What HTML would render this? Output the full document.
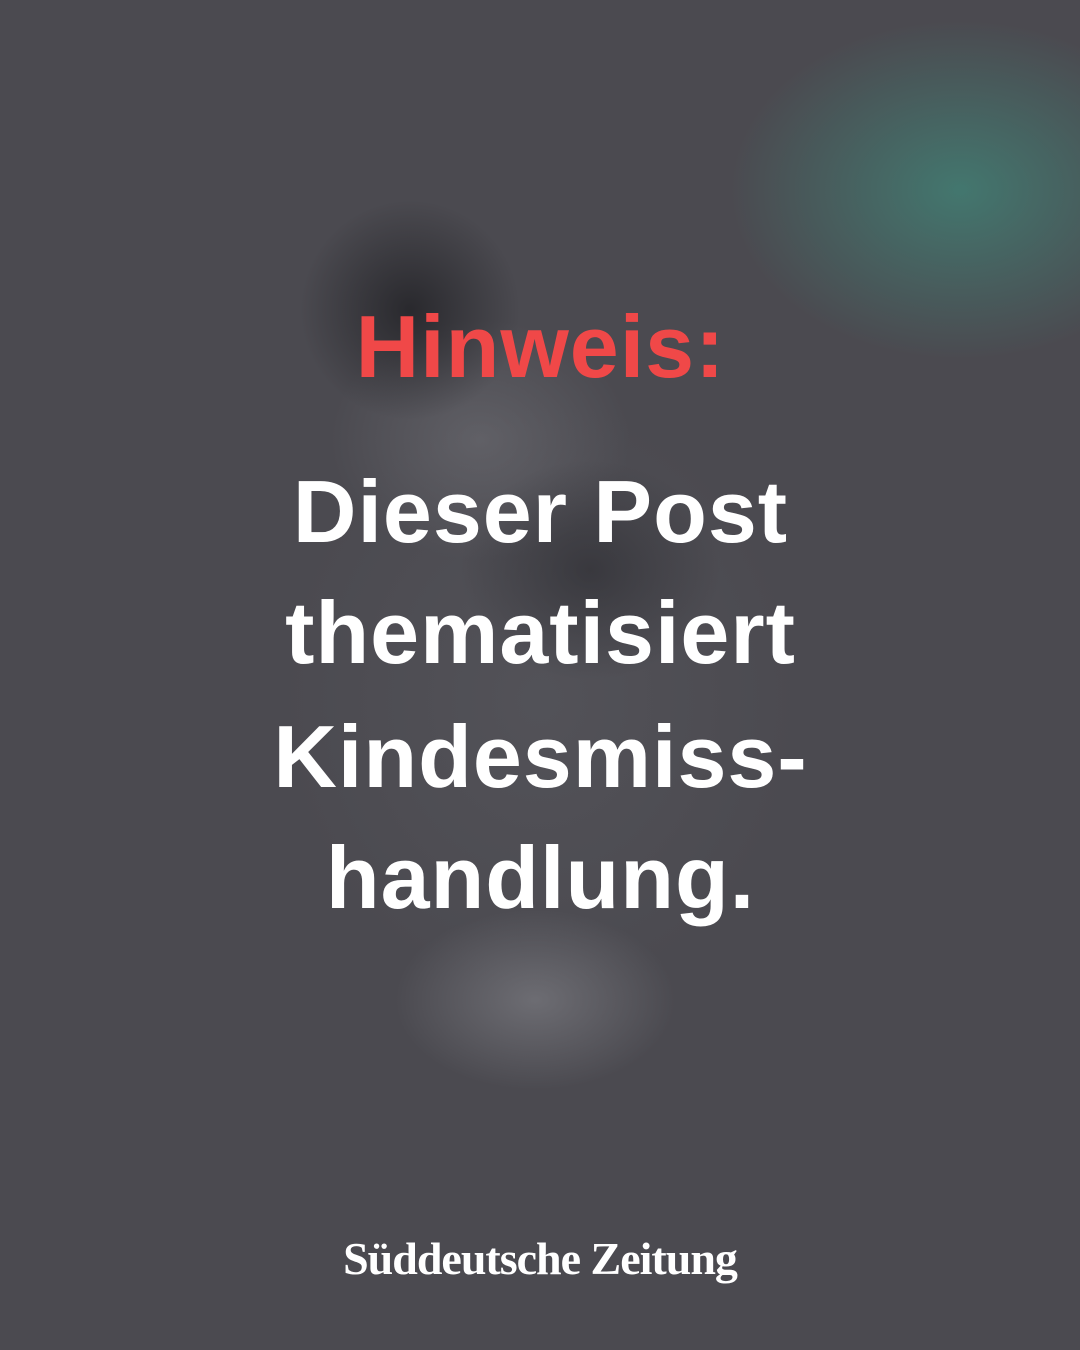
<!DOCTYPE html>
<html><head><meta charset="utf-8"><style>
html,body{margin:0;padding:0}
body{width:1080px;height:1350px;overflow:hidden;position:relative;background:#4b4a50;font-family:"Liberation Sans",sans-serif}
.bg{position:absolute;inset:0;background:
radial-gradient(ellipse 230px 170px at 960px 190px,rgba(65,130,118,0.8),rgba(65,130,118,0) 100%),
radial-gradient(ellipse 110px 110px at 410px 310px,rgba(30,30,34,0.75),rgba(30,30,34,0) 100%),
radial-gradient(ellipse 130px 110px at 590px 570px,rgba(35,35,40,0.5),rgba(35,35,40,0) 100%),
radial-gradient(ellipse 150px 120px at 480px 440px,rgba(110,110,116,0.6),rgba(110,110,116,0) 100%),
radial-gradient(ellipse 140px 90px at 535px 1000px,rgba(120,120,126,0.75),rgba(120,120,126,0) 100%),
radial-gradient(ellipse 260px 300px at 540px 700px,rgba(90,90,96,0.5),rgba(90,90,96,0) 100%);}
.t{position:absolute;left:0;width:1080px;text-align:center;font-weight:bold;font-size:88px;line-height:1;color:#fff;letter-spacing:1px;padding-left:1px;box-sizing:border-box}
.logo{position:absolute;left:0;width:1080px;text-align:center;top:1232px;font-family:"Liberation Serif",serif;font-weight:bold;font-size:46px;color:#fff;letter-spacing:-1px}
</style></head><body>
<div class="bg"></div>
<div class="t" style="top:303px;color:#f04848">Hinweis:</div>
<div class="t" style="top:468px">Dieser Post</div>
<div class="t" style="top:589px">thematisiert</div>
<div class="t" style="top:713px">Kindesmiss-</div>
<div class="t" style="top:834px">handlung.</div>
<div class="logo">Süddeutsche Zeitung</div>
</body></html>
